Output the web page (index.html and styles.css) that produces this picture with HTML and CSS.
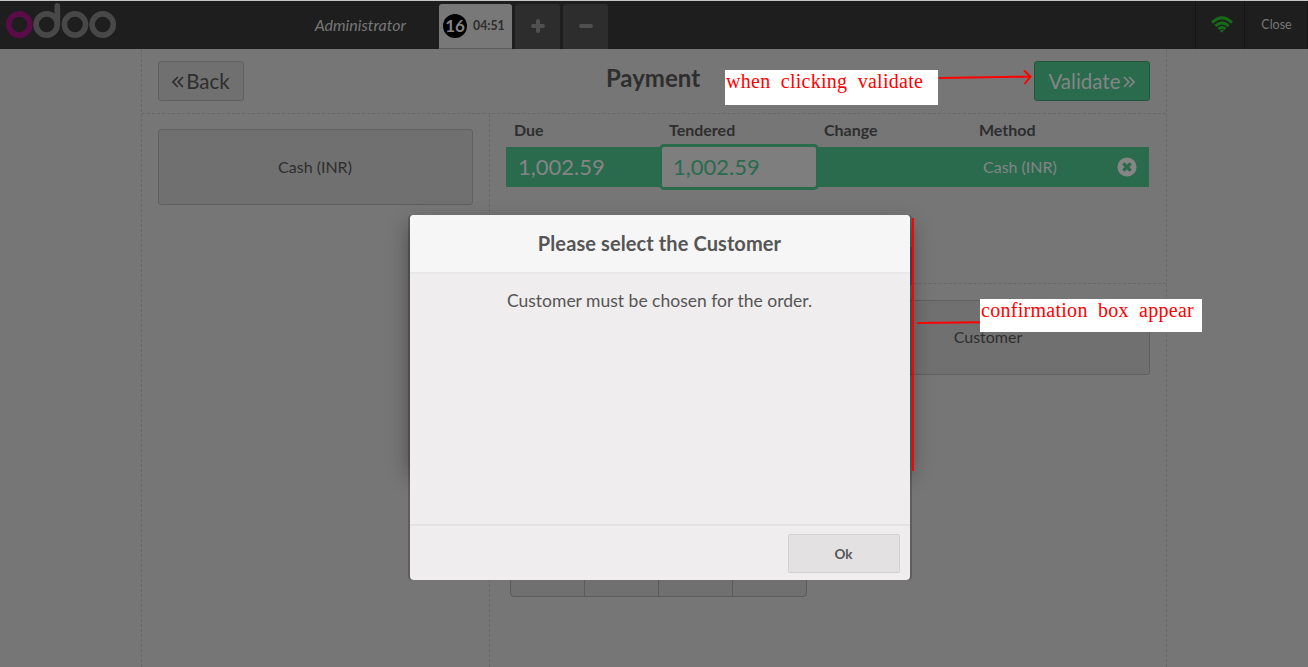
FILE: index.html
```html
<!DOCTYPE html>
<html lang="en">
<head>
<meta charset="utf-8">
<title>Payment</title>
<link rel="stylesheet" href="styles.css">
</head>
<body>
<div class="pos">
  <header class="topbar">
    <svg class="logo" width="112" height="38" viewBox="0 0 112 38" fill="none" stroke-width="5.6">
      <circle class="logo-first" cx="13.3" cy="21.5" r="10.6"/>
      <g class="logo-rest">
        <circle cx="40.7" cy="21.5" r="10.6"/>
        <path d="M51.3 21.5V2.8" stroke-linecap="round"/>
        <circle cx="69" cy="21.5" r="10.6"/>
        <circle cx="96.7" cy="21.5" r="10.6"/>
      </g>
    </svg>
    <div class="username">Administrator</div>
    <div class="orders">
      <div class="order"><span class="order-number">16</span><span class="order-time">04:51</span></div>
      <div class="order-btn"><svg width="16" height="16" viewBox="0 0 16 16"><path d="M8 3v10M3 8h10" stroke="#505050" stroke-width="4" stroke-linecap="round"/></svg></div>
      <div class="order-btn"><svg width="16" height="16" viewBox="0 0 16 16"><path d="M3 8h10" stroke="#505050" stroke-width="4" stroke-linecap="round"/></svg></div>
    </div>
    <div class="status">
      <svg width="22" height="17" viewBox="0 0 22 17" fill="none" stroke="#166a18" stroke-width="3">
        <path d="M1 6.600Q11-3 21 6.600"/><path d="M4.300 10Q11 3.700 17.700 10"/><path d="M7.400 13Q11 9.900 14.600 13"/><path d="M9 14.500Q11 12.800 13 14.500L11 16.800Z" fill="#166a18" stroke="none"/>
      </svg>
    </div>
    <div class="close">Close</div>
  </header>

  <main class="screen">
    <div class="screen-head">
      <div class="button back"><svg width="12" height="14" viewBox="0 0 12 14"><path d="M5.800 2 1 7l4.800 5M11 2 6.200 7l4.800 5"/></svg>Back</div>
      <h1>Payment</h1>
      <div class="button validate">Validate<svg width="12" height="14" viewBox="0 0 12 14"><path d="m1 2 4.800 5L1 12M6.200 2 11 7l-4.800 5"/></svg></div>
    </div>
    <div class="screen-body">
      <section class="methods"><div class="button method">Cash (INR)</div></section>
      <section class="details">
        <div class="lines">
          <div class="line-head"><span>Due</span><span>Tendered</span><span>Change</span><span>Method</span></div>
          <div class="line">
            <span class="amount">1,002.59</span>
            <span class="amount edit">1,002.59</span>
            <span></span>
            <span class="line-method">Cash (INR)</span>
            <svg class="remove" width="20" height="20" viewBox="0 0 20 20"><circle cx="10" cy="10" r="9.600" fill="#858585"/><path d="m6.300 6.300 7.400 7.400m0-7.400-7.400 7.400" stroke="#2a6b4e" stroke-width="3.200"/></svg>
          </div>
        </div>
        <div class="controls">
          <div class="numpad"><i></i><i></i><i></i><i></i></div>
          <div class="button customer">Customer</div>
        </div>
      </section>
    </div>
  </main>

  <div class="popup-shadow"></div>
  <div class="popup">
    <div class="popup-title">Please select the Customer</div>
    <div class="popup-body">Customer must be chosen for the order.</div>
    <div class="popup-foot"><div class="ok">Ok</div></div>
  </div>

  <svg class="arrows" width="1308" height="667" fill="none" stroke="#f00" stroke-width="2">
    <path d="M911 247v38" stroke="#463c52"/>
    <path d="M939 78 1030 76.500M1024 70.500 1030.500 76.500 1024.500 84"/>
    <path d="M913 218v253M917 323 981 322.300"/>
  </svg>
  <div class="note note-validate">when clicking validate</div>
  <div class="note note-box">confirmation box appear</div>
</div>
</body>
</html>
```
FILE: styles.css
```css
* { box-sizing: border-box; }
body { margin: 0; font-family: Lato, sans-serif; color: #2e2e2e; }
.pos { position: relative; width: 1308px; height: 667px; overflow: hidden; background: #767676; display: flex; flex-direction: column; }

.topbar { height: 49px; flex: none; display: flex; background: #1e1e1e; border-top: 1px solid #c4c8c4; }
.logo { margin: 2px 0 0 6px; }
.logo-first { stroke: #5a0c48; }
.logo-rest { stroke: #484848; }
.username { width: 288px; text-align: right; font-size: 16px; font-style: italic; line-height: 47px; color: #777; }
.orders { display: flex; gap: 3px; margin-left: 33px; padding-top: 3px; }
.order { width: 73px; background: #787878; border-bottom: 1px solid #5c5c5c; border-radius: 3px 3px 0 0; display: flex; align-items: center; padding-left: 4px; font-weight: bold; }
.order-number { width: 24px; height: 24px; border-radius: 50%; background: #000; color: #858585; font-size: 17px; line-height: 24px; text-align: center; }
.order-time { font-size: 12.300px; margin-left: 6px; margin-top: -2px; }
.order-btn { width: 45px; background: #2d2d2d; border-radius: 3px 3px 0 0; display: flex; align-items: center; justify-content: center; padding: 0 0 1px; }
.status { margin-left: auto; width: 49px; border-left: 1px solid #151515; display: flex; justify-content: center; padding: 15px 0 0 4px; }
.close { width: 64px; border-left: 1px solid #151515; border-right: 1px solid #151515; padding-left: 1px; text-align: center; font-size: 12.500px; line-height: 48px; color: #777; }

.screen { flex: 1; width: 1026px; margin-left: 141px; border: dashed #686868; border-width: 0 1px; display: flex; flex-direction: column; }
.screen-head { height: 65px; border-bottom: 1px dashed #686868; padding: 12px 16px 0; display: flex; justify-content: space-between; }
.screen-head h1 { margin: 0 0 0 28px; font-size: 24px; line-height: 34px; font-weight: bold; }
.button { background: #707070; border: 1px solid #606060; border-radius: 3px; display: flex; align-items: center; justify-content: center; padding-bottom: 2px; font-size: 16px; }
.back, .validate { height: 40px; padding-bottom: 1px; font-size: 20.500px; gap: 3px; }
.back { width: 86px; gap: 2px; }
.validate { width: 116px; background: #2a6b4e; border-color: #20563d; color: #858585; }
.button svg { fill: none; stroke: currentColor; stroke-width: 1.700; margin-top: 2px; }

.screen-body { flex: 1; display: flex; }
.methods { width: 348px; border-right: 1px dashed #686868; padding: 15px 16px; }
.method { width: 315px; height: 76px; padding-right: 1px; }
.details { flex: 1; display: flex; flex-direction: column; }
.lines { height: 170px; border-bottom: 1px dashed #686868; padding-left: 16px; }
.line-head { display: grid; grid-template-columns: repeat(4, 155px); height: 33px; padding-left: 8px; font-size: 16px; font-weight: bold; line-height: 32px; }
.line { width: 643px; height: 40px; background: #2a6b4e; display: grid; grid-template: 40px / 155px 156px 156px 140px 36px; align-items: center; color: #858585; }
.amount { font-size: 22px; line-height: 40px; padding-left: 12px; }
.edit { width: 160px; height: 46px; padding-left: 11px; background: #7e7e7e; border: 3px solid #2a6b4e; border-radius: 5px; color: #2a6b4e; margin: -3px 0 -3px -2px; }
.line-method { font-size: 16px; padding: 0 0 2px 10px; }
.remove { margin-left: 4px; }
.controls { display: flex; justify-content: space-between; padding: 16px 16px 0 20px; }
.numpad { width: 297px; height: 297px; display: grid; grid-template-columns: 73px 74px 74px 74px; background: #707070; border: 1px solid #5b5b5b; border-radius: 4px; }
.numpad i + i { border-left: 1px solid #5b5b5b; }
.customer { width: 324px; height: 75px; }

.popup-shadow { position: absolute; left: 410px; top: 215px; width: 500px; height: 250px; box-shadow: 0 10px 20px rgba(0, 0, 0, .4); }
.popup { position: absolute; left: 410px; top: 215px; width: 500px; height: 365px; display: flex; flex-direction: column; border-radius: 4px; background: #efedee; color: #555; text-align: center; box-shadow: -2px 0 0 rgba(0, 0, 0, .2), 2px 0 0 rgba(0, 0, 0, .2); }
.popup-title { height: 59px; background: #f6f6f6; border-bottom: 2px solid #e9e9e9; border-radius: 4px 4px 0 0; padding-right: 1px; font-size: 20px; letter-spacing: .1px; font-weight: bold; line-height: 57px; }
.popup-body { flex: 1; padding: 15px 1px 0 0; font-size: 17.500px; line-height: 24px; }
.popup-foot { height: 56px; border-top: 2px solid #e4e2e3; padding: 8px 10px 0; display: flex; justify-content: flex-end; }
.ok { width: 112px; height: 39px; background: #e3e1e2; border: 1px solid #d2d0d1; border-radius: 2px; padding-right: 1px; font-size: 13.500px; font-weight: bold; line-height: 38px; }

.arrows { position: absolute; left: 0; top: 0; }
.note { position: absolute; background: #fff; color: #f00; font-family: "Liberation Serif", serif; font-size: 20px; line-height: 22px; padding-left: 1px; white-space: nowrap; word-spacing: 5px; letter-spacing: .28px; }
.note-validate { left: 725px; top: 70px; width: 213px; height: 35px; }
.note-box { left: 980px; top: 299px; width: 222px; height: 33px; }
```
